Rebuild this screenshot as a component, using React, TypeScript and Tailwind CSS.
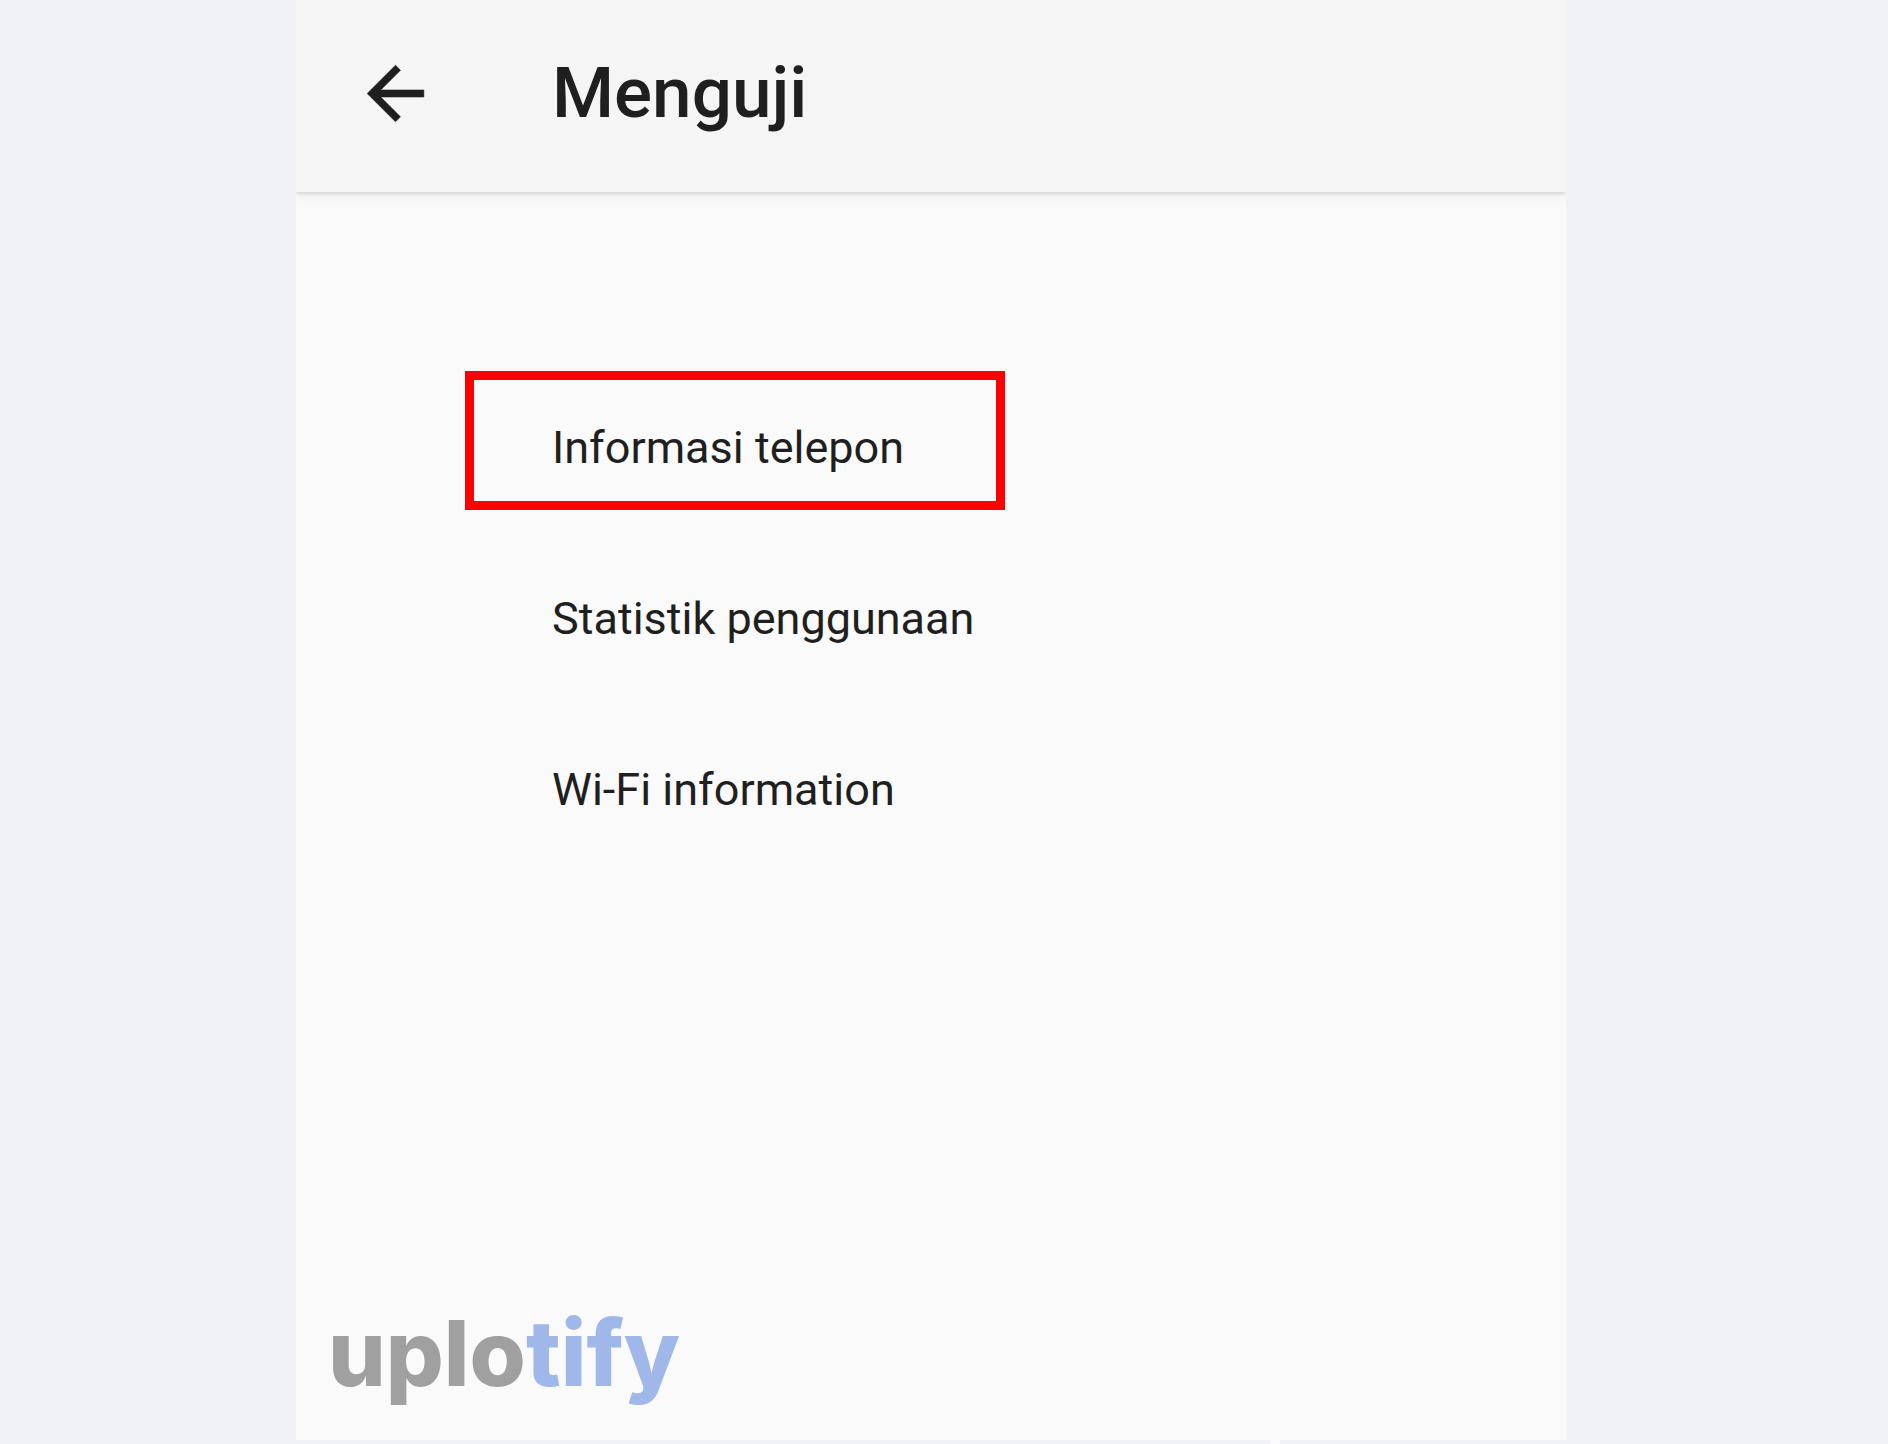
const items = [
  { label: "Informasi telepon", highlighted: true },
  { label: "Statistik penggunaan", highlighted: false },
  { label: "Wi-Fi information", highlighted: false },
];

function BackArrow() {
  return (
    <svg
      viewBox="0 0 24 24"
      className="size-[85px]"
      fill="currentColor"
      stroke="currentColor"
      strokeWidth="0.15"
      aria-hidden="true"
    >
      <path d="M20 11H7.83l5.59-5.59L12 4l-8 8 8 8 1.41-1.41L7.83 13H20v-2z" />
    </svg>
  );
}

function Header() {
  return (
    <header className="relative flex h-48 items-center bg-[#f5f5f5] pb-1.5 pl-[57px] shadow-[0_2px_4px_rgba(0,0,0,0.12),0_6px_14px_rgba(0,0,0,0.04)]">
      <button type="button" aria-label="Kembali" className="shrink-0">
        <BackArrow />
      </button>
      <h1 className="ml-[114px] text-[71px] leading-[84px] font-medium">Menguji</h1>
    </header>
  );
}

function Menu() {
  return (
    <ul className="pt-[170px]">
      {items.map((item) => (
        <li key={item.label} className="relative">
          <button
            type="button"
            className="flex h-[171px] w-full items-center pl-64 text-left text-[45px] leading-[53px]"
          >
            {item.label}
          </button>

          {/* Red marker around the entry to pick */}
          {item.highlighted && (
            <div className="pointer-events-none absolute top-[9px] left-[169px] h-[139px] w-[540px] border-9 border-[#fe0000]" />
          )}
        </li>
      ))}
    </ul>
  );
}

export default function App() {
  return (
    <div className="grid min-h-screen grid-cols-[296fr_1270fr_322fr] bg-[#f0f2f7] font-[Roboto,sans-serif] text-[#1f1f1f]">
      <main className="col-start-2 flex flex-col overflow-x-clip bg-[#fafafa]">
        <Header />
        <Menu />

        {/* Watermark */}
        <p className="mt-auto pb-8 pl-8 font-[Inter,sans-serif] text-[91px] leading-[110px] font-extrabold text-[#a0a0a0]">
          uplo<span className="text-[#a0b7e9]">tify</span>
        </p>

        {/* Bottom strip with a small gap */}
        <div className="flex h-1 justify-end gap-[10px]">
          <div className="flex-1 bg-[#f1f2f5]" />
          <div className="w-[286px] bg-[#f1f2f5]" />
        </div>
      </main>
    </div>
  );
}
